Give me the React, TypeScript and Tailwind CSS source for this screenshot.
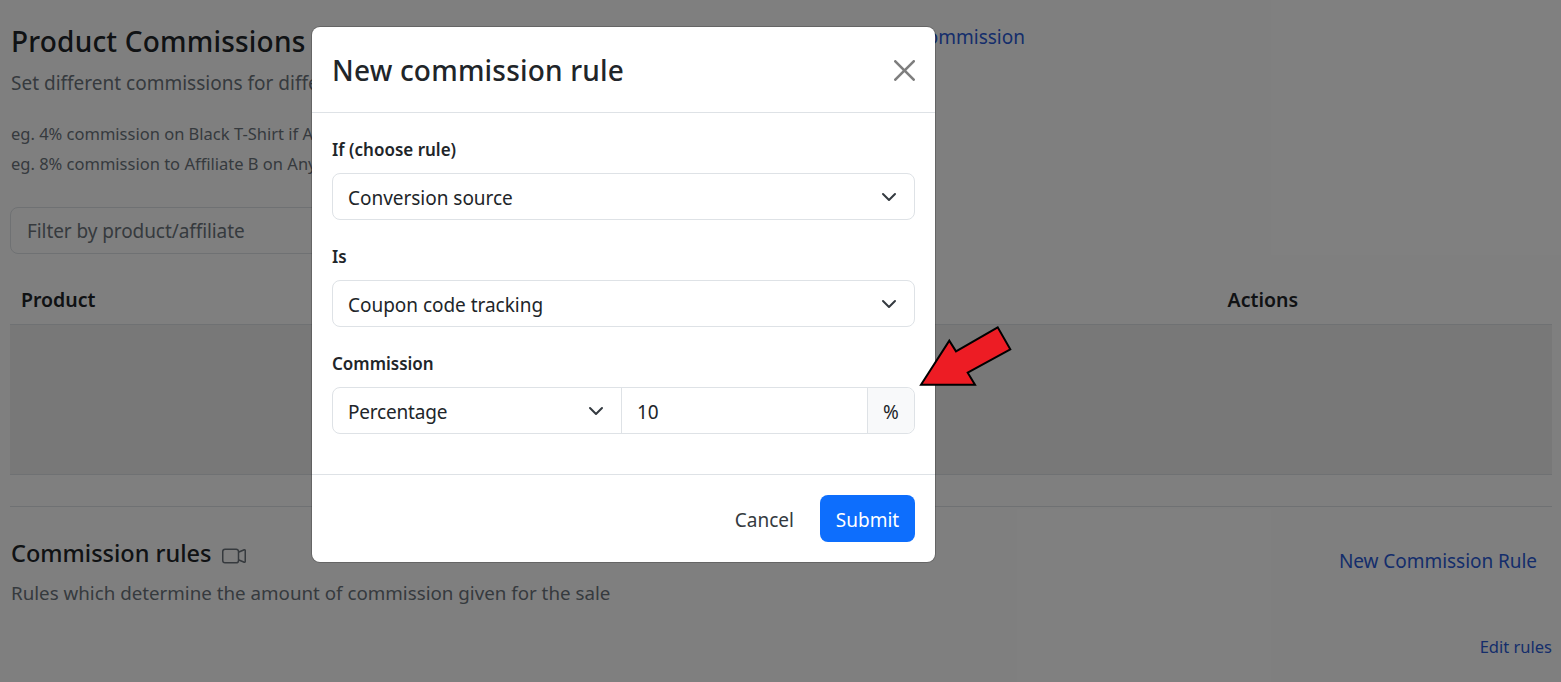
import React from 'react';
import { BsCameraVideo } from 'react-icons/bs';

function Chevron() {
  return (
    <svg viewBox="0 0 16 16" className="h-4 w-4 shrink-0" fill="none" stroke="#343a40" strokeWidth="2" strokeLinecap="round" strokeLinejoin="round">
      <path d="m2 5 6 6 6-6" />
    </svg>
  );
}

function SelectBox({ label }: { label: string }) {
  return (
    <div className="flex h-[47px] items-center justify-between rounded-lg border border-[#dee2e6] bg-white pl-[15px] pr-[17px] text-[#212529]">
      <span className="pt-[3px] tracking-[-0.03px]">{label}</span>
      <Chevron />
    </div>
  );
}

function Modal() {
  return (
    <div className="absolute left-[312px] top-[27px] flex h-[535px] w-[623px] flex-col rounded-lg bg-white text-[19px] text-[#212529] ring-1 ring-black/20">
      <div className="flex h-[86px] items-center justify-between border-b border-[#dee2e6] px-5">
        <h5 className="text-[28px] font-medium tracking-[0.2px]">New commission rule</h5>
        <svg viewBox="0 0 16 16" className="mt-[1px] h-[21px] w-[21px] opacity-50" fill="#000">
          <path d="M.293.293a1 1 0 0 1 1.414 0L8 6.586 14.293.293a1 1 0 1 1 1.414 1.414L9.414 8l6.293 6.293a1 1 0 0 1-1.414 1.414L8 9.414l-6.293 6.293a1 1 0 0 1-1.414-1.414L6.586 8 .293 1.707a1 1 0 0 1 0-1.414z" />
        </svg>
      </div>
      <div className="flex flex-1 flex-col px-5 pt-[24px]">
        <label className="mb-[10px] text-[17px] font-semibold leading-[26px]">If (choose rule)</label>
        <SelectBox label="Conversion source" />
        <label className="mb-[10px] mt-[24px] text-[17px] font-semibold leading-[26px]">Is</label>
        <SelectBox label="Coupon code tracking" />
        <label className="mb-[10px] mt-[24px] text-[17px] font-semibold leading-[26px]">Commission</label>
        <div className="flex h-[47px] rounded-lg border border-[#dee2e6]">
          <div className="flex w-[289px] items-center justify-between border-r border-[#dee2e6] pl-[15px] pr-[17px]">
            <span className="pt-[3px] tracking-[-0.2px]">Percentage</span>
            <Chevron />
          </div>
          <div className="flex flex-1 items-center pl-[15px] pt-[3px]">10</div>
          <div className="flex w-[47px] items-center justify-center rounded-r-lg border-l border-[#dee2e6] bg-[#f8f9fa] pt-[3px]">%</div>
        </div>
      </div>
      <div className="flex h-[88px] items-center justify-end gap-[26px] border-t border-[#dee2e6] px-5">
        <span className="pt-[4px] text-[#343a40]">Cancel</span>
        <button className="h-[47px] w-[95px] rounded-lg bg-[#0d6efd] pt-[4px] text-white">Submit</button>
      </div>
    </div>
  );
}

export default function App() {
  return (
    <div className="relative h-[682px] w-full overflow-hidden bg-white font-['Noto_Sans',sans-serif] text-[#212529]">
      <div className="pl-[10px] pr-[9px]">
        <div className="flex justify-between pl-px pr-[527px] pt-[22px]">
          <h3 className="text-[28px] font-medium leading-[38px] tracking-[0.2px]">Product Commissions</h3>
          <a className="text-[19px] leading-[30px] text-[#2a5bd7]">New Product Commission</a>
        </div>
        <p className="mt-[8px] pl-px text-[19px] leading-[30px] text-[#6c757d]">Set different commissions for different products</p>
        <p className="mt-[21px] pl-px text-[16.5px] leading-[30px] text-[#6c757d]">eg. 4% commission on Black T-Shirt if Affiliate A</p>
        <p className="pl-px text-[16.5px] leading-[30px] text-[#6c757d]">eg. 8% commission to Affiliate B on Any Product</p>
        <div className="mt-[28px] flex h-[47px] w-[400px] items-center rounded-lg border border-[#dee2e6] pl-4 pt-[2px] text-[19px] tracking-[-0.08px] text-[#6c757d]">Filter by product/affiliate</div>

        <div className="mt-[23px] flex h-[48px] items-center justify-between border-b border-[#dee2e6] pb-[2px] pl-[11px] pr-[254px] text-[19.5px] font-semibold">
          <span>Product</span>
          <span>Actions</span>
        </div>
        <div className="h-[150px] border-b border-[#dee2e6] bg-[#f0f0f0]" />
        <hr className="mt-[31px] border-[#dee2e6]" />
        <div className="mt-[29px] flex justify-between pl-px pr-[15px]">
          <div>
            <h4 className="flex items-center gap-[11px] text-[23.5px] font-medium leading-[34px]">
              Commission rules
              <BsCameraVideo className="mt-[6px] h-[24px] w-[24px] text-[#6c757d]" />
            </h4>
            <p className="mt-[8px] text-[18.75px] leading-[30px] text-[#6c757d]">Rules which determine the amount of commission given for the sale</p>
          </div>
          <a className="mt-[10px] text-[19px] leading-[30px] tracking-[-0.05px] text-[#2a5bd7]">New Commission Rule</a>
        </div>
        <div className="mt-[25px] text-right text-[16.5px] leading-[28px] text-[#2a5bd7]">Edit rules</div>
      </div>

      <div className="absolute inset-0 bg-black/50" />
      <Modal />

      <svg className="absolute left-[915px] top-[322px] h-[70px] w-[100px]" viewBox="915 322 100 70">
        <polygon points="921,384.7 949.3,340.7 956,351.3 997.7,327.3 1010.3,349.3 967.7,372.7 975,384.7" fill="#ed1c24" stroke="#000" strokeWidth="2" />
      </svg>
    </div>
  );
}
